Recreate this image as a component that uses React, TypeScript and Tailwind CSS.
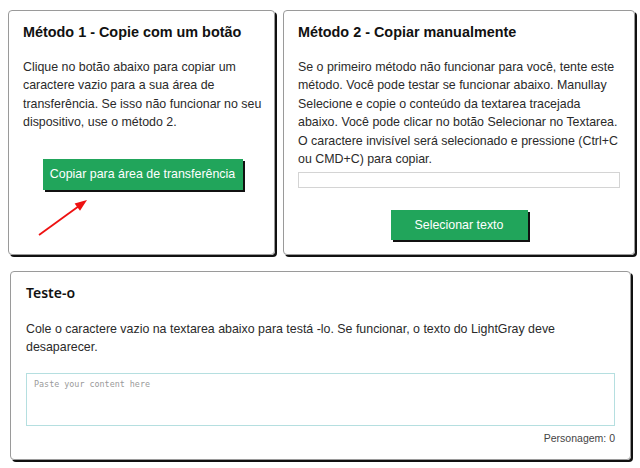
export default function App() {
  return (
    <div className="min-h-screen bg-white pt-[10px] text-[#222]" style={{ fontFamily: '"Liberation Sans", Arial, sans-serif' }}>
      {/* Top row: two methods */}
      <div className="flex items-start gap-[8px] pl-[8px]">
        {/* Método 1 */}
        <div className="relative w-[267px] h-[245px] rounded-[4px] border border-[#9a9a9a] shadow-[2px_2px_0_#111] pl-[14px] pr-[10px] pt-[12px]">
          <h2 className="text-[14.4px] font-bold leading-[18px] text-[#111]">Método 1 - Copie com um botão</h2>
          <p className="mt-[16.5px] text-[12.4px] leading-[18.5px] text-[#2a2a2a]">
            Clique no botão abaixo para copiar um caractere vazio para a sua área de transferência. Se isso não funcionar no seu dispositivo, use o método 2.
          </p>
          <div className="mt-[27.5px] flex justify-center pr-[2px]">
            <button className="h-[31px] w-[200px] whitespace-nowrap bg-[#21a55b] text-[12.4px] text-white shadow-[2px_2px_0_#111]">
              Copiar para área de transferência
            </button>
          </div>
          <svg className="absolute left-[28px] top-[186px]" width="54" height="42" viewBox="0 0 54 42">
            <line x1="2" y1="38" x2="42" y2="9" stroke="#ee1111" strokeWidth="1.8" />
            <polygon points="50,3 43,13.7 37.6,6.4" fill="#ee1111" />
          </svg>
        </div>

        {/* Método 2 */}
        <div className="w-[352px] h-[245px] rounded-[4px] border border-[#9a9a9a] shadow-[2px_2px_0_#111] px-[14px] pt-[12px]">
          <h2 className="text-[14.4px] font-bold leading-[18px] text-[#111]">Método 2 - Copiar manualmente</h2>
          <p className="mt-[16.5px] text-[12.4px] leading-[18.5px] text-[#2a2a2a]">
            Se o primeiro método não funcionar para você, tente este método. Você pode testar se funcionar abaixo. Manullay Selecione e copie o conteúdo da textarea tracejada abaixo. Você pode clicar no botão Selecionar no Textarea. O caractere invisível será selecionado e pressione (Ctrl+C ou CMD+C) para copiar.
          </p>
          <input className="mt-[3.5px] block h-[16px] w-full border border-[#d4d4d4] bg-white outline-none" readOnly value="" />
          <div className="mt-[22px] flex justify-center">
            <button className="h-[30px] w-[137px] whitespace-nowrap bg-[#21a55b] text-[12.4px] text-white shadow-[2px_2px_0_#111]">
              Selecionar texto
            </button>
          </div>
        </div>
      </div>

      {/* Teste-o */}
      <div className="ml-[10px] mt-[16px] w-[621px] h-[189px] rounded-[4px] border border-[#9a9a9a] shadow-[2px_2px_0_#111] px-[15px] pt-[11px]">
        <h2 className="text-[14px] font-semibold leading-[20px] text-[#111]" style={{ fontFamily: '"Noto Sans", sans-serif' }}>Teste-o</h2>
        <p className="mt-[17px] text-[12.4px] leading-[18px] text-[#2a2a2a]">
          Cole o caractere vazio na textarea abaixo para testá -lo. Se funcionar, o texto do LightGray deve desaparecer.
        </p>
        <textarea
          className="mt-[17px] block h-[53px] w-full resize-none border border-[#b5dfe0] px-[7px] py-[5px] text-[8.4px] leading-[10px] outline-none placeholder:text-[#9a9a9a]"
          style={{ fontFamily: '"DejaVu Sans Mono", monospace' }}
          placeholder="Paste your content here"
        />
        <div className="mt-[6px] text-right text-[10.5px] leading-[13px] text-[#444]">Personagem: 0</div>
      </div>
    </div>
  )
}
